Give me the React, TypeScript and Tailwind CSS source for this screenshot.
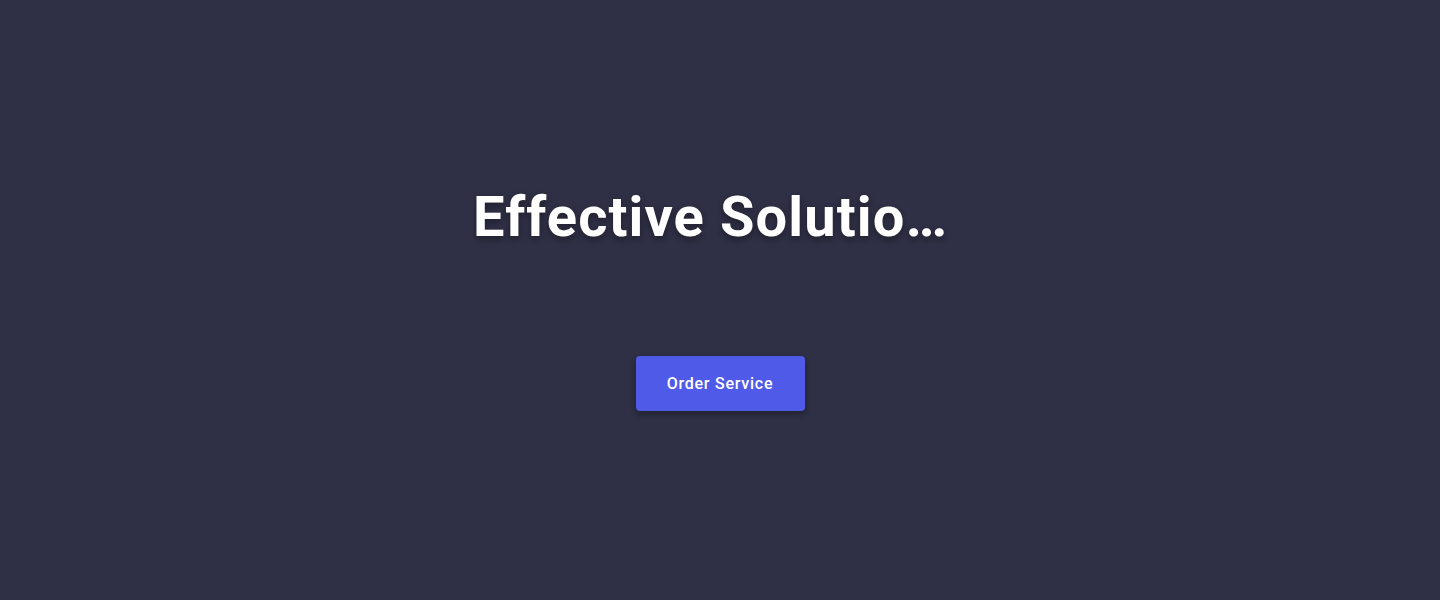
import React from 'react';

export default function App() {
  return (
    <div className="h-[600px] w-full bg-[#2f2f45] flex flex-col items-center justify-center pb-2 font-['Roboto',sans-serif]">
      {/* Hero */}
      <h1 className="w-[494px] truncate py-2 text-center text-[56px] leading-[56px] font-bold text-white tracking-[0.02em] [text-shadow:0_3px_6px_rgba(0,0,0,0.35)]">
        Effective Solutions for Your Business
      </h1>
      <button
        type="button"
        className="mt-[103px] h-[55px] w-[169px] rounded-[4px] bg-[#505ae8] text-white text-[16px] font-medium tracking-[0.75px] shadow-[0_3px_6px_rgba(0,0,0,0.3)]"
      >
        Order Service
      </button>
    </div>
  );
}
